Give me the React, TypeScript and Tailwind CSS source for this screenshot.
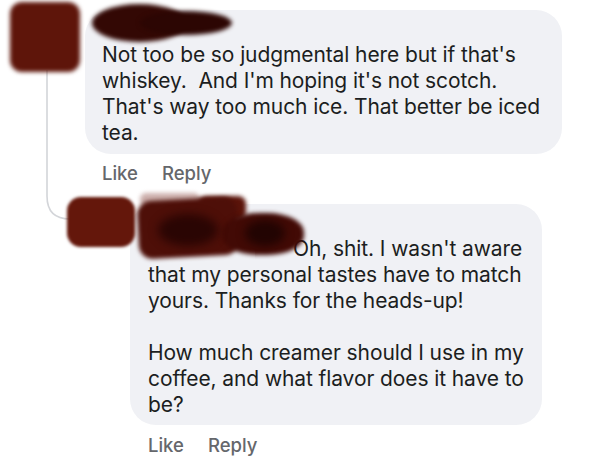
import React from 'react'

const font = { fontFamily: 'Inter, "Liberation Sans", Arial, sans-serif' }

function Lines({ lines, indent = 0 }: { lines: string[]; indent?: number }) {
  return (
    <div className="text-[21px] leading-[26px] text-[#1c1e21] whitespace-pre tracking-[-0.1px]">
      {lines.map((l, i) => (
        <div key={i} className={`h-[26px] ${i === 0 && indent ? 'indent-[145px]' : ''}`}>
          {l}
        </div>
      ))}
    </div>
  )
}

function Actions() {
  return (
    <div className="flex gap-[24px] text-[18.5px] font-medium text-[#65676b] leading-[22px]">
      <span>Like</span>
      <span>Reply</span>
    </div>
  )
}

export default function App() {
  return (
    <div className="relative w-[599px] h-[468px] bg-white overflow-hidden" style={font}>
      {/* thread line */}
      <svg className="absolute left-0 top-0" width="599" height="468" fill="none">
        <path d="M47 70 V196 Q47 219 70 219" stroke="#d3d5d9" strokeWidth="1.6" />
      </svg>

      {/* first comment */}
      <div className="relative flex pt-[2px] pl-[10px]">
        <div className="w-[70px] h-[70px] rounded-[12px] bg-[#5e150a] blur-[2px]" />
        <div className="ml-[5px] mt-[8px] flex flex-col">
          <div className="w-[477px] rounded-[26px] bg-[#f0f1f5] pl-[17px] pt-[32px] pb-[8px]">
            <Lines
              lines={[
                "Not too be so judgmental here but if that's",
                "whiskey.  And I'm hoping it's not scotch.",
                "That's way too much ice. That better be iced",
                'tea.',
              ]}
            />
          </div>
          <div className="pl-[17px] pt-[8px]">
            <Actions />
          </div>
        </div>
        {/* name redaction */}
        <div className="absolute left-[92px] top-[4px] w-[95px] h-[38px] rounded-[50%] bg-[#330804] blur-[2px]" />
        <div className="absolute left-[140px] top-[11px] w-[92px] h-[24px] rounded-[50%] bg-[#2c0603] blur-[2px]" />
      </div>

      {/* reply */}
      <div className="relative flex pt-[10px] pl-[67px]">
        <div className="mt-[3px] w-[68px] h-[50px] rounded-[14px] bg-[#64170b] blur-[1.5px]" />
        <div className="-ml-[5px] mt-[10px] flex flex-col">
          <div className="w-[412px] rounded-[26px] bg-[#f0f1f5] pl-[18px] pt-[32px] pb-[7px]">
            <Lines
              indent={145}
              lines={[
                "Oh, shit. I wasn't aware",
                'that my personal tastes have to match',
                'yours. Thanks for the heads-up!',
                '',
                'How much creamer should I use in my',
                'coffee, and what flavor does it have to',
                'be?',
              ]}
            />
          </div>
          <div className="pl-[18px] pt-[9px]">
            <Actions />
          </div>
        </div>
        {/* name redaction */}
        <div className="absolute left-[140px] top-[9px] w-[60px] h-[13px] rounded-[6px] bg-[#cdb0ad] blur-[2px]" />
        <div className="absolute left-[198px] top-[12px] w-[48px] h-[24px] rounded-[8px] bg-[#5a1309] blur-[2px]" />
        <div className="absolute left-[138px] top-[15px] w-[100px] h-[58px] rounded-[14px] bg-[#4e0f08] blur-[2px] -rotate-[3deg]" />
        <div className="absolute left-[222px] top-[29px] w-[82px] h-[42px] rounded-[45%] bg-[#420a05] blur-[2px]" />
        <div className="absolute left-[158px] top-[30px] w-[60px] h-[32px] rounded-[50%] bg-[#2a0503] blur-[5px]" />
        <div className="absolute left-[245px] top-[36px] w-[40px] h-[26px] rounded-[50%] bg-[#220402] blur-[4px]" />
      </div>
    </div>
  )
}
